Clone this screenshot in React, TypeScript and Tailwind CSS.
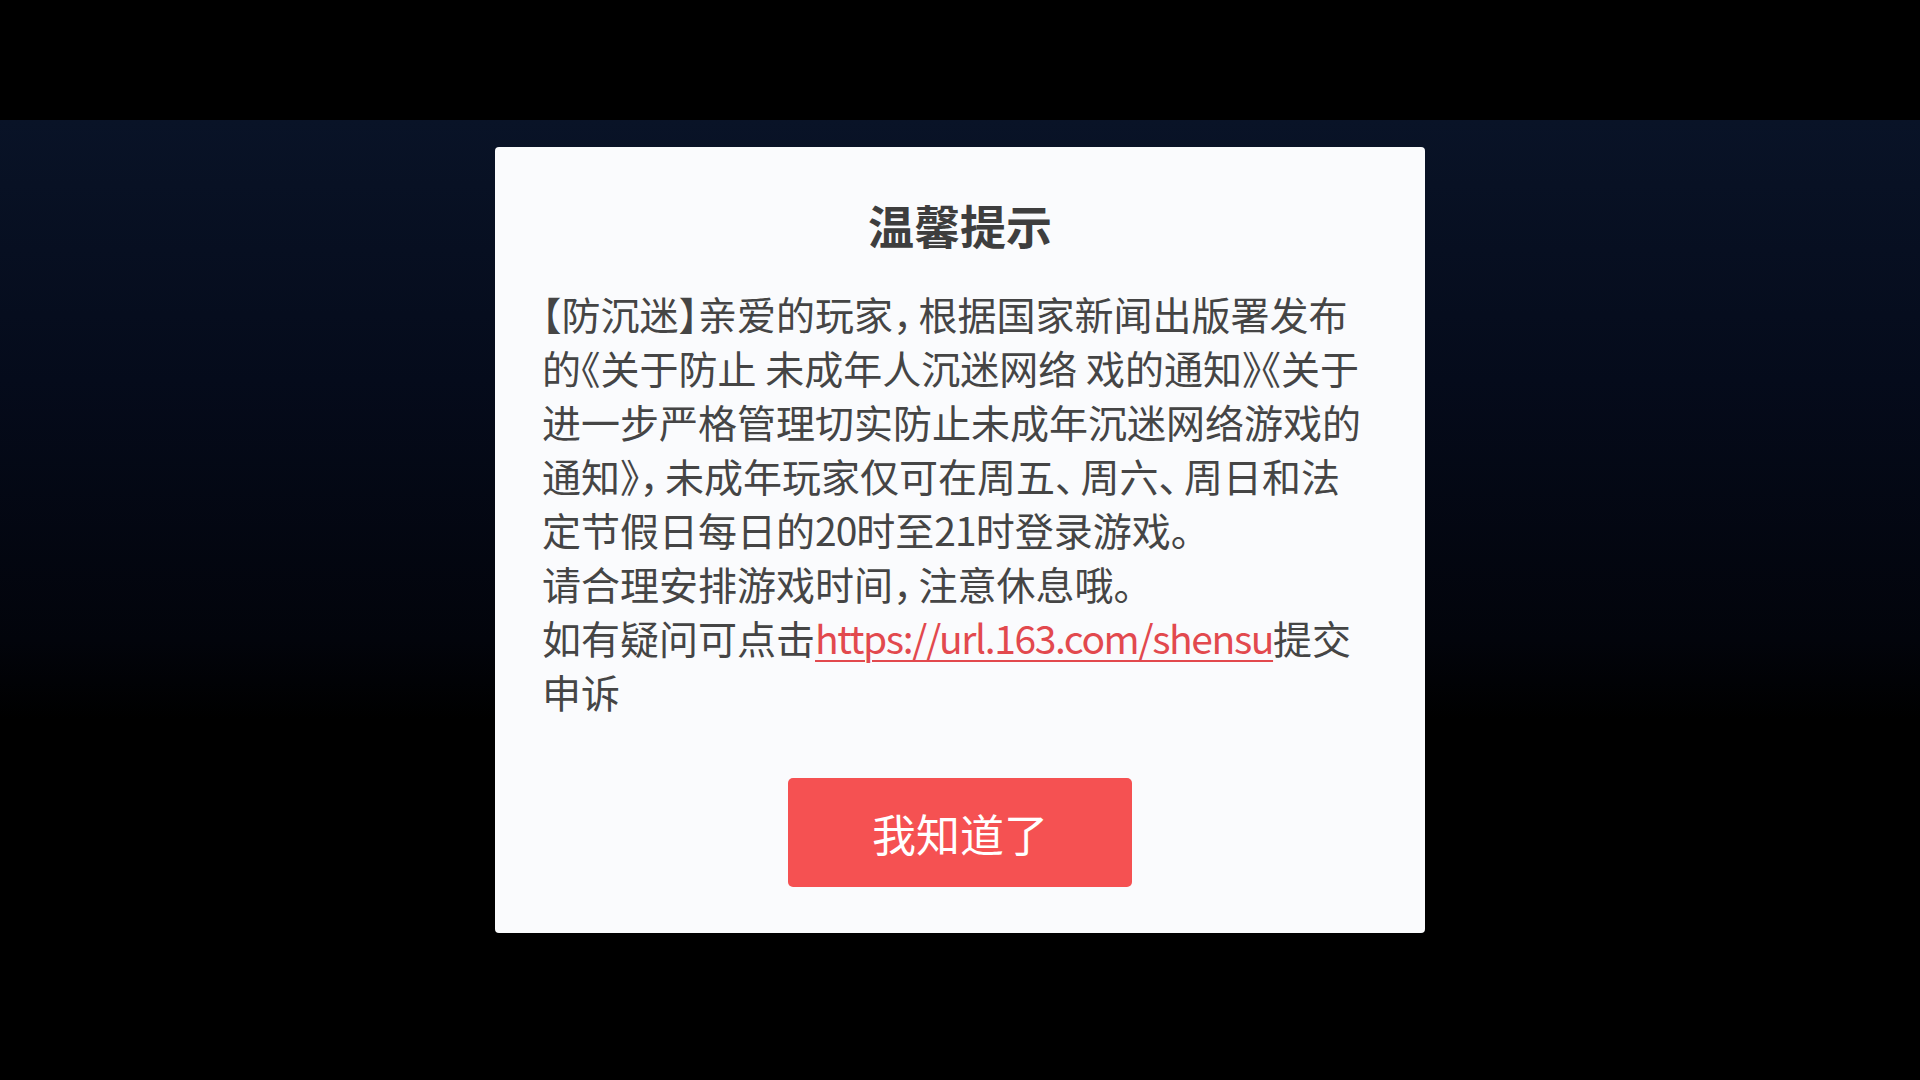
// full-width comma / enumeration mark with a little extra room after it
const P = ({ c }: { c: string }) => <span className="pr-[6px]">{c}</span>;

const lines: React.ReactNode[] = [
  <>【防沉迷】亲爱的玩家<P c="，" />根据国家新闻出版署发布</>,
  "的《关于防止 未成年人沉迷网络 戏的通知》《关于",
  "进一步严格管理切实防止未成年沉迷网络游戏的",
  <>通知》<P c="，" />未成年玩家仅可在周五<P c="、" />周六<P c="、" />周日和法</>,
  <>定节假日每日的<span className="tracking-[-1px]">20</span>时至<span className="tracking-[-1px]">21</span>时登录游戏。</>,
  <>请合理安排游戏时间<P c="，" />注意休息哦。</>,
  <>
    如有疑问可点击
    <a
      href="#"
      className="text-[#e2494e] tracking-[-1.4px] underline decoration-[2px] underline-offset-[6px]"
    >
      https://url.163.com/shensu
    </a>
    提交
  </>,
  "申诉",
];

export default function App() {
  return (
    <div className="h-screen w-full overflow-hidden bg-[linear-gradient(to_bottom,#000_0px,#000_120px,#091327_120px,#050b1b_380px,#02040b_640px,#000_720px)] font-['Noto_Sans_CJK_SC','Noto_Sans',sans-serif]">
      <div className="flex justify-center pt-[147px]">
        <div className="w-[930px] rounded-[4px] bg-[#fafbfd] px-[47px] pt-[47px] pb-[46px]">
          <h1 className="text-center text-[46px] leading-[60px] font-bold text-[#3e3e3e]">
            温馨提示
          </h1>

          <div className="mt-[32px] text-[39px] leading-[54px] text-[#454545] [font-feature-settings:'halt']">
            {lines.map((line, i) => (
              <div key={i} className="whitespace-nowrap">
                {line}
              </div>
            ))}
          </div>

          <button className="mx-auto mt-[60px] flex h-[109px] w-[344px] items-center justify-center rounded-[5px] bg-[#f55152] text-[44px] text-white">
            我知道了
          </button>
        </div>
      </div>
    </div>
  );
}
